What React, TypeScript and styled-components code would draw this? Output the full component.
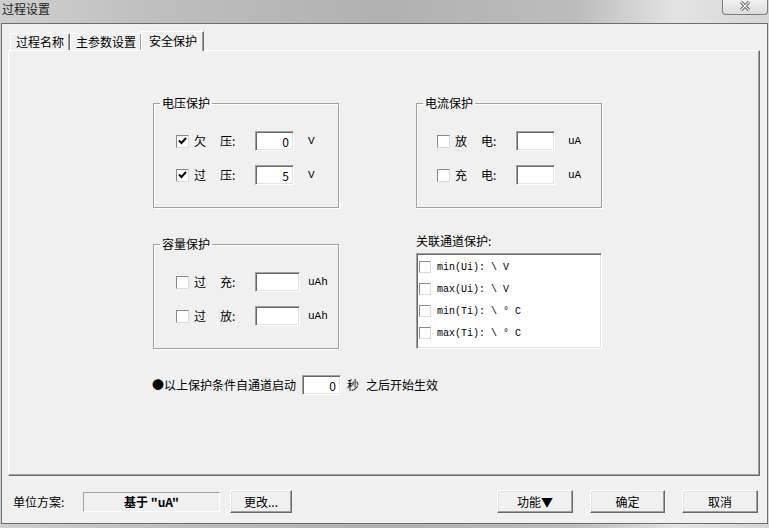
import React from "react";
import styled, { createGlobalStyle } from "styled-components";

const GlobalStyle = createGlobalStyle`
  html, body {
    margin: 0;
    padding: 0;
  }

  body {
    width: 769px;
    height: 528px;
    overflow: hidden;
    background: linear-gradient(
      90deg,
      #cfcfcf 0%,
      #bdbdbd 22%,
      #b1b1b1 50%,
      #bcbcbc 75%,
      #e4e4e4 88%,
      #d6d6d6 100%
    );
    font-family: "Noto Sans CJK SC", "Liberation Sans", sans-serif;
    font-size: 12px;
    color: #000;
  }
`;

const mono = `"Liberation Mono", "DejaVu Sans Mono", monospace`;

const Window = styled.div`
  width: 769px;
  height: 528px;
  display: flex;
  flex-direction: column;
`;

const TitleBar = styled.div`
  height: 23px;
  display: flex;
  align-items: flex-start;
  justify-content: space-between;
`;

const Title = styled.div`
  padding-left: 2px;
  line-height: 18px;
  font-size: 12px;
  color: #1c1c1c;
`;

const CloseButton = styled.div`
  width: 46px;
  height: 15px;
  margin-right: 1px;
  box-sizing: border-box;
  border: 1px solid #7c7c7c;
  border-top: none;
  border-radius: 0 0 4px 4px;
  background: linear-gradient(#f2f2f2, #dcdcdc);
  display: flex;
  justify-content: center;
  align-items: flex-start;
  padding-top: 1px;
`;

const Client = styled.div`
  margin: 0 1px;
  width: 767px;
  height: 501px;
  box-sizing: border-box;
  border: 1px solid #6e6e6e;
  background: #f0f0f0;
  display: flex;
  flex-direction: column;
  padding: 7px 7px 0 6px;
`;

const TabStrip = styled.div`
  display: flex;
  align-items: flex-end;
  padding-left: 2px;
  margin-bottom: -1px;
  position: relative;
  z-index: 1;
`;

const Tab = styled.div<{ $active?: boolean }>`
  box-sizing: border-box;
  height: ${(p) => (p.$active ? 20 : 17)}px;
  margin-bottom: ${(p) => (p.$active ? 0 : 1)}px;
  margin-left: ${(p) => (p.$active ? -1 : 0)}px;
  padding: ${(p) => (p.$active ? "1px 6px 0 7px" : "0 5px")};
  line-height: 16px;
  background: #f0f0f0;
  border-top: 1px solid #fff;
  border-left: 1px solid #fff;
  border-right: 1px solid #696969;
  box-shadow: inset -1px 0 #a0a0a0;
  white-space: nowrap;
`;

const Panel = styled.div`
  height: 426px;
  box-sizing: border-box;
  border-top: 1px solid #fff;
  border-left: 1px solid #fff;
  border-right: 1px solid #696969;
  border-bottom: 1px solid #696969;
  box-shadow: inset -1px -1px #a0a0a0;
  padding: 45px 0 0 144px;
`;

const Grid = styled.div`
  display: grid;
  grid-template-columns: 186px 186px;
  column-gap: 77px;
  row-gap: 26px;
  align-items: start;
`;

const Group = styled.fieldset<{ $offset?: number }>`
  margin: ${(p) => p.$offset ?? 0}px 0 0 0;
  padding: 0;
  min-width: 0;
  border: 1px solid #a0a0a0;
  box-shadow: 1px 1px #fff, inset 1px 1px #fff;
`;

const Legend = styled.legend`
  margin-left: 6px;
  padding: 0 2px;
  line-height: 14px;
  font-size: 12px;
`;

const GroupBody = styled.div<{ $inset: number }>`
  display: flex;
  flex-direction: column;
  gap: 14px;
  padding: 21px 0 22px ${(p) => p.$inset}px;
`;

const Row = styled.div`
  height: 20px;
  display: flex;
  align-items: center;
`;

const CheckBox = styled.span<{ $size?: number }>`
  width: ${(p) => p.$size ?? 13}px;
  height: ${(p) => p.$size ?? 13}px;
  box-sizing: border-box;
  flex: none;
  background: #fff;
  border-top: 1px solid #8a8a8a;
  border-left: 1px solid #8a8a8a;
  border-right: 1px solid #dcdcdc;
  border-bottom: 1px solid #dcdcdc;
  display: flex;
  align-items: center;
  justify-content: center;
`;

const Caption = styled.span`
  width: 61px;
  margin-left: 5px;
  display: flex;
  gap: 14px;
  flex: none;
  line-height: 14px;
`;

const Field = styled.input<{ $w: number; $gap?: number }>`
  width: ${(p) => p.$w}px;
  height: 20px;
  box-sizing: border-box;
  margin: 0 0 0 ${(p) => p.$gap ?? 0}px;
  padding: 0 4px 0 0;
  flex: none;
  background: #fff;
  border-top: 1px solid #a0a0a0;
  border-left: 1px solid #a0a0a0;
  border-right: 1px solid #fff;
  border-bottom: 1px solid #fff;
  box-shadow: inset 1px 1px #696969, inset -1px -1px #e3e3e3;
  text-align: right;
  font-family: "Noto Sans CJK SC", sans-serif;
  font-size: 12px;
  color: #000;
  outline: none;
`;

const Unit = styled.span<{ $gap: number }>`
  margin-left: ${(p) => p.$gap}px;
  font-family: ${mono};
  font-size: 11px;
`;

const ListLabel = styled.div`
  line-height: 14px;
`;

const ListBox = styled.div`
  margin-top: 5px;
  height: 96px;
  box-sizing: border-box;
  background: #fff;
  border-top: 1px solid #a0a0a0;
  border-left: 1px solid #a0a0a0;
  border-right: 1px solid #fff;
  border-bottom: 1px solid #fff;
  box-shadow: inset 1px 1px #696969, inset -1px -1px #e3e3e3;
  padding: 2px 0 0 2px;
`;

const ListItem = styled.div`
  height: 22px;
  display: flex;
  align-items: center;
  gap: 6px;
  font-family: ${mono};
  font-size: 10px;
  white-space: pre;
`;

const DelayRow = styled.div`
  grid-column: 1 / span 2;
  display: flex;
  align-items: center;
  margin-left: -1px;
  line-height: 14px;
`;

const Words = styled.span<{ $gap?: number }>`
  margin-left: ${(p) => p.$gap ?? 0}px;
`;

const BottomBar = styled.div`
  display: flex;
  align-items: flex-start;
  padding: 14px 2px 0 5px;
`;

const BarLabel = styled.div`
  width: 70px;
  line-height: 23px;
`;

const UnitScheme = styled.div`
  width: 137px;
  height: 20px;
  margin-top: 2px;
  box-sizing: border-box;
  border-top: 1px solid #a0a0a0;
  border-left: 1px solid #a0a0a0;
  border-right: 1px solid #fff;
  border-bottom: 1px solid #fff;
  text-align: center;
  line-height: 18px;
  font-weight: bold;
`;

const Button = styled.div<{ $w: number; $gap?: number }>`
  width: ${(p) => p.$w}px;
  height: 23px;
  margin-left: ${(p) => p.$gap ?? 0}px;
  box-sizing: border-box;
  background: #f0f0f0;
  border-top: 1px solid #fff;
  border-left: 1px solid #fff;
  border-right: 1px solid #696969;
  border-bottom: 1px solid #696969;
  box-shadow: inset -1px -1px #a0a0a0, inset 1px 1px #e3e3e3;
  display: flex;
  align-items: center;
  justify-content: center;
  line-height: 14px;
`;

const Spacer = styled.div`
  flex: 1;
`;

const Check = () => (
  <svg width="9" height="8" viewBox="0 0 9 8">
    <path d="M1 3.5 L3.5 6 L8 1" fill="none" stroke="#000" strokeWidth="2" />
  </svg>
);

type Line = { a: string; b: string; value?: string; checked?: boolean };

const SettingGroup = ({
  title,
  lines,
  inset,
  fieldWidth,
  unit,
  unitGap,
  offset,
}: {
  title: string;
  lines: Line[];
  inset: number;
  fieldWidth: number;
  unit: string;
  unitGap: number;
  offset?: number;
}) => (
  <Group $offset={offset}>
    <Legend>{title}</Legend>
    <GroupBody $inset={inset}>
      {lines.map((l) => (
        <Row key={l.a + l.b}>
          <CheckBox>{l.checked && <Check />}</CheckBox>
          <Caption>
            <span>{l.a}</span>
            <span>{l.b}:</span>
          </Caption>
          <Field $w={fieldWidth} readOnly value={l.value ?? ""} />
          <Unit $gap={unitGap}>{unit}</Unit>
        </Row>
      ))}
    </GroupBody>
  </Group>
);

const channels = ["min(Ui): \\ V", "max(Ui): \\ V", "min(Ti): \\ ° C", "max(Ti): \\ ° C"];

export default function App() {
  return (
    <Window>
      <GlobalStyle />
      <TitleBar>
        <Title>过程设置</Title>
        <CloseButton>
          <svg width="12" height="10" viewBox="0 0 12 10">
            <path d="M2 1 L10 9 M10 1 L2 9" stroke="#4a4a4a" strokeWidth="3" />
            <path d="M2 1 L10 9 M10 1 L2 9" stroke="#fff" strokeWidth="1.2" />
          </svg>
        </CloseButton>
      </TitleBar>

      <Client>
        <TabStrip>
          <Tab>过程名称</Tab>
          <Tab>主参数设置</Tab>
          <Tab $active>安全保护</Tab>
        </TabStrip>

        <Panel>
          <Grid>
            <SettingGroup
              title="电压保护"
              inset={22}
              fieldWidth={39}
              unit="V"
              unitGap={14}
              lines={[
                { a: "欠", b: "压", value: "0", checked: true },
                { a: "过", b: "压", value: "5", checked: true },
              ]}
            />
            <SettingGroup
              title="电流保护"
              inset={20}
              fieldWidth={39}
              unit="uA"
              unitGap={13}
              lines={[
                { a: "放", b: "电" },
                { a: "充", b: "电" },
              ]}
            />
            <SettingGroup
              title="容量保护"
              inset={22}
              fieldWidth={45}
              unit="uAh"
              unitGap={8}
              offset={3}
              lines={[
                { a: "过", b: "充" },
                { a: "过", b: "放" },
              ]}
            />
            <div>
              <ListLabel>关联通道保护:</ListLabel>
              <ListBox>
                {channels.map((c) => (
                  <ListItem key={c}>
                    <CheckBox $size={12} />
                    <span>{c}</span>
                  </ListItem>
                ))}
              </ListBox>
            </div>
            <DelayRow>
              <Words>●以上保护条件自通道启动</Words>
              <Field $w={39} $gap={6} readOnly value="0" />
              <Words $gap={6}>秒</Words>
              <Words $gap={7}>之后开始生效</Words>
            </DelayRow>
          </Grid>
        </Panel>

        <BottomBar>
          <BarLabel>单位方案:</BarLabel>
          <UnitScheme>基于 "uA"</UnitScheme>
          <Button $w={62} $gap={10}>更改...</Button>
          <Spacer />
          <Button $w={76}>功能▼</Button>
          <Button $w={75} $gap={17}>确定</Button>
          <Button $w={76} $gap={17}>取消</Button>
        </BottomBar>
      </Client>
    </Window>
  );
}
